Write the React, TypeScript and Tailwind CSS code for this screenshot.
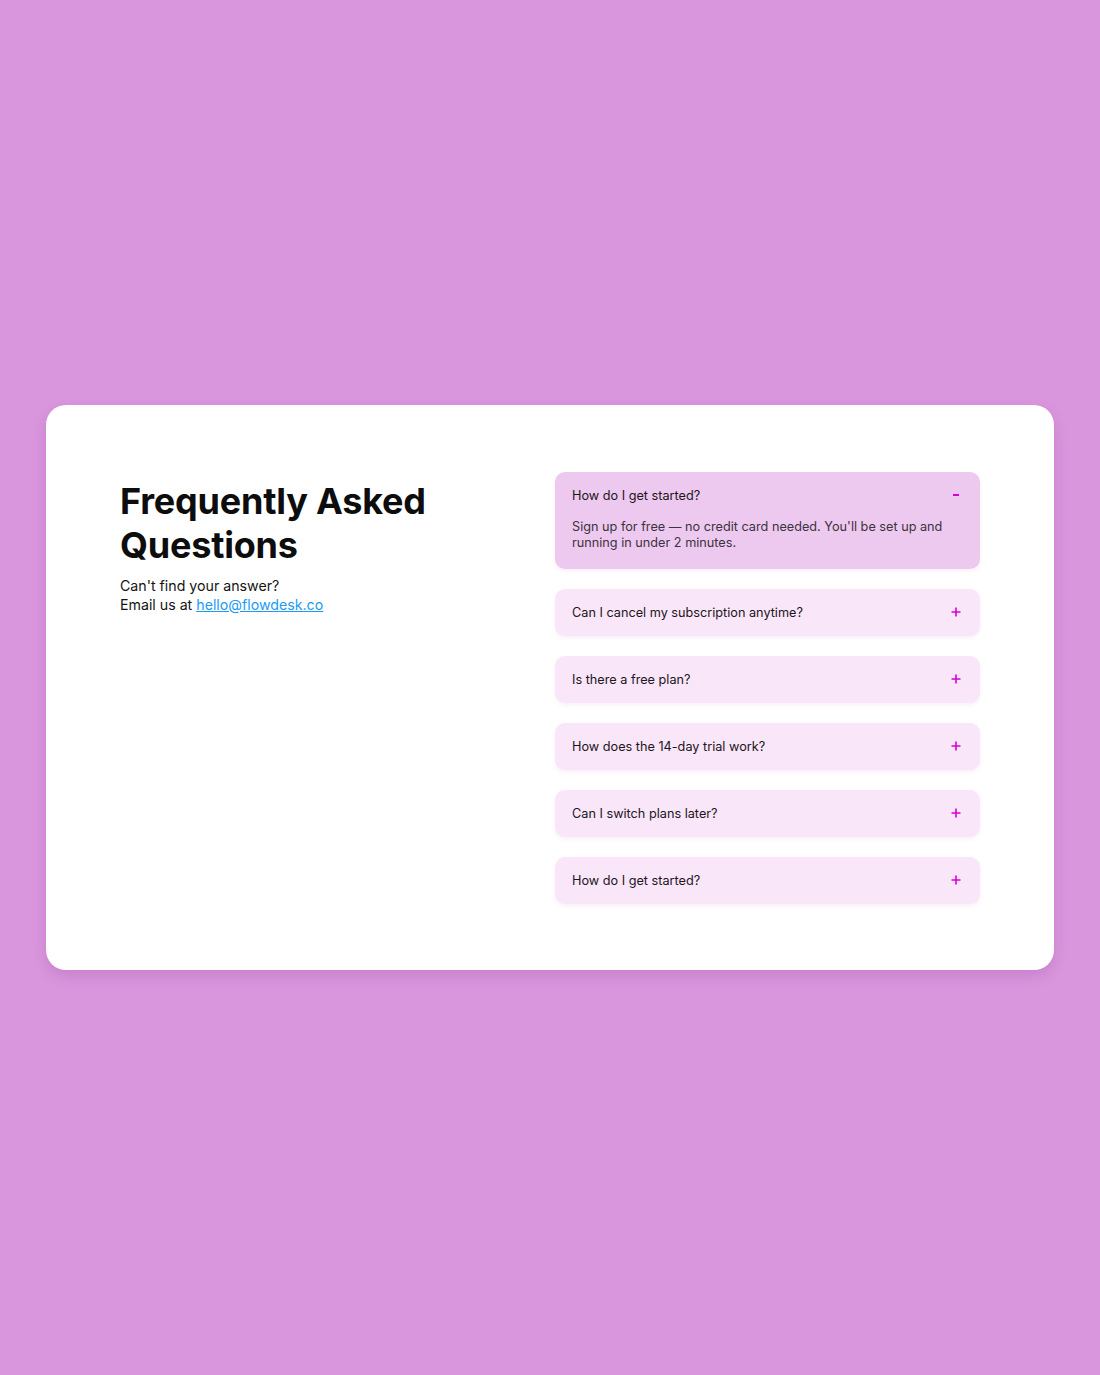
import React from "react";

const items = [
  { q: "How do I get started?", a: "Sign up for free — no credit card needed. You'll be set up and running in under 2 minutes.", open: true },
  { q: "Can I cancel my subscription anytime?" },
  { q: "Is there a free plan?" },
  { q: "How does the 14-day trial work?" },
  { q: "Can I switch plans later?" },
  { q: "How do I get started?" },
];

export default function App() {
  return (
    <div className="min-h-[1375px] w-full bg-[#d996dd] flex items-center justify-center pb-[1px]" style={{ fontFamily: "Inter, 'Noto Sans', sans-serif" }}>
      <div className="w-[1008px] bg-white rounded-[20px] shadow-[0_6px_14px_rgba(120,40,130,0.18)] px-[74px] pt-[67px] pb-[66px] grid grid-cols-2 gap-[10px]">
        <div className="pt-[7px]">
          <h1 className="text-[36px] leading-[44px] font-bold text-[#0d0d0d] tracking-[-0.2px]">Frequently Asked<br />Questions</h1>
          <p className="mt-[9px] text-[14.2px] leading-[19px] text-[#141414]">
            Can't find your answer?<br />Email us at{" "}
            <a href="#" className="text-[#1a9bf5] underline">hello@flowdesk.co</a>
          </p>
        </div>
        <div className="flex flex-col gap-[20px]">
          {items.map((it, i) => (
            <div
              key={i}
              className={
                (it.open ? "bg-[#edc9ef] pb-[18px]" : "bg-[#f9e6f9] pb-[15px]") +
                " rounded-[10px] pl-[17px] pr-[20px] pt-[15px] shadow-[0_2px_4px_rgba(200,120,200,0.12)]"
              }
            >
              <div className="flex items-center justify-between">
                <span className="text-[12.7px] leading-[17px] text-[#1c1620]">{it.q}</span>
                {it.open ? (
                  <span className="block w-[6px] h-[2px] bg-[#d600da] mr-[1px]" />
                ) : (
                  <svg width="10" height="10" viewBox="0 0 10 10" className="mr-[-1px]">
                    <path d="M5 0.5v9M0.5 5h9" stroke="#d600da" strokeWidth="1.6" />
                  </svg>
                )}
              </div>
              {it.open && (
                <p className="mt-[15px] text-[12.7px] leading-[16px] text-[#3b3340]">{it.a}</p>
              )}
            </div>
          ))}
        </div>
      </div>
    </div>
  );
}
